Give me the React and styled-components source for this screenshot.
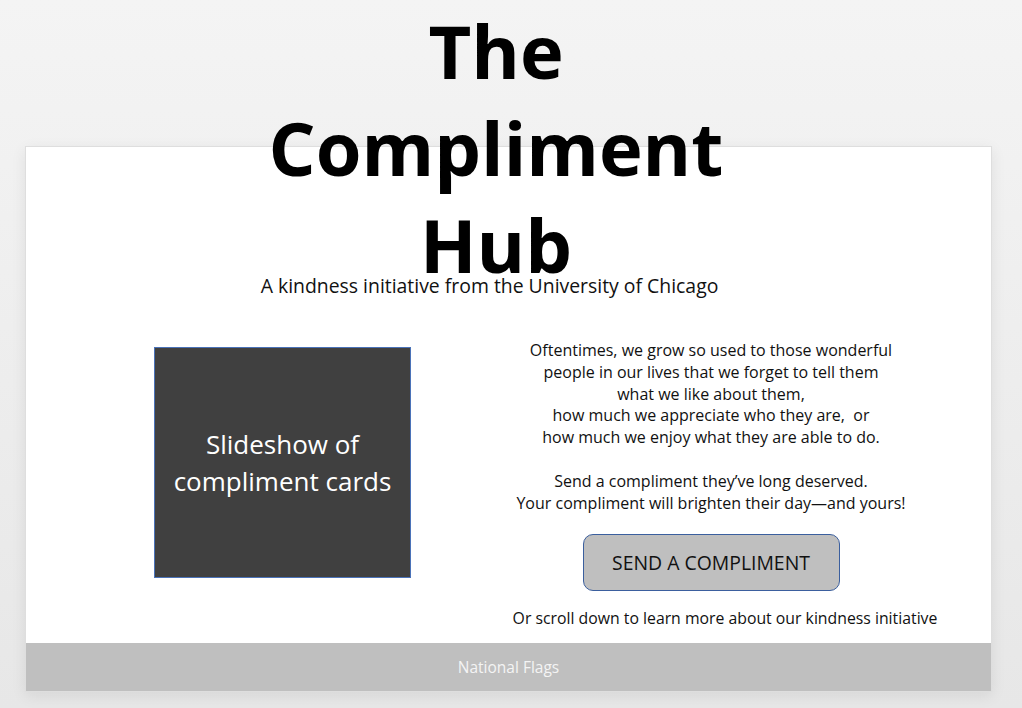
import React from "react";
import styled, { createGlobalStyle } from "styled-components";

const GlobalStyle = createGlobalStyle`
  html, body {
    margin: 0;
    padding: 0;
  }
  body {
    background: linear-gradient(#f4f4f4, #e7e7e7);
    min-height: 708px;
    font-family: "Open Sans", "Noto Sans", sans-serif;
    color: #111;
  }
`;

function App() {
  return (
    <Page>
      <GlobalStyle />
      <Title>
        The
        <br />
        Compliment
        <br />
        Hub
      </Title>
      <Card>
        <Subtitle>A kindness initiative from the University of Chicago</Subtitle>
        <Content>
          <Slideshow>
            Slideshow of
            <br />
            compliment cards
          </Slideshow>
          <Intro>
            <Paragraph>
              Oftentimes, we grow so used to those wonderful
              <br />
              people in our lives that we forget to tell them
              <br />
              what we like about them,
              <br />
              how much we appreciate who they are,&nbsp; or
              <br />
              how much we enjoy what they are able to do.
            </Paragraph>
            <Paragraph>
              Send a compliment they’ve long deserved.
              <br />
              Your compliment will brighten their day—and yours!
            </Paragraph>
            <SendButton>SEND A COMPLIMENT</SendButton>
            <ScrollHint>Or scroll down to learn more about our kindness initiative</ScrollHint>
          </Intro>
        </Content>
        <Footer>National Flags</Footer>
      </Card>
    </Page>
  );
}

export default App;

const Page = styled.div`
  display: flex;
  flex-direction: column;
  align-items: flex-start;
  padding: 2px 0 0 25px;
`;

const Title = styled.h1`
  position: relative;
  z-index: 1;
  align-self: stretch;
  margin: 0 30px -147px 0;
  padding-right: 25px;
  text-align: center;
  font-size: 74px;
  line-height: 97px;
  font-weight: 700;
  color: #000;
`;

const Card = styled.div`
  width: 967px;
  height: 546px;
  background: #fff;
  border: 1px solid #dedede;
  box-sizing: border-box;
  box-shadow: 0 4px 14px rgba(0, 0, 0, 0.08);
  display: flex;
  flex-direction: column;
`;

const Subtitle = styled.p`
  position: relative;
  z-index: 2;
  margin: 126px 0 0;
  padding-right: 38px;
  text-align: center;
  font-size: 19.4px;
  line-height: 26px;
`;

const Content = styled.div`
  flex: 1;
  display: flex;
  align-items: flex-start;
  gap: 70px;
  padding: 35px 0 0 128px;
`;

const Slideshow = styled.div`
  width: 257px;
  height: 231px;
  margin-top: 13px;
  box-sizing: border-box;
  border: 1.5px solid #4a72b8;
  background: #404040;
  color: #fff;
  display: flex;
  align-items: center;
  justify-content: center;
  text-align: center;
  font-size: 26px;
  line-height: 37px;
`;

const Intro = styled.div`
  width: 460px;
  padding-top: 6px;
  display: flex;
  flex-direction: column;
  align-items: center;
  text-align: center;
  font-size: 16px;
  line-height: 21.8px;
`;

const Paragraph = styled.p`
  margin: 0 0 22px;
`;

const SendButton = styled.button`
  width: 257px;
  height: 57px;
  margin-top: -3px;
  border: 1.5px solid #3b5f9e;
  border-radius: 10px;
  background: #bfbfbf;
  color: #111;
  font-family: inherit;
  font-size: 19.4px;
  cursor: pointer;
`;

const ScrollHint = styled.p`
  margin: 17px 0 0 28px;
  font-size: 15.8px;
  white-space: nowrap;
`;

const Footer = styled.div`
  height: 48px;
  background: #bfbfbf;
  color: #f4f4f4;
  display: flex;
  align-items: center;
  justify-content: center;
  font-size: 15.5px;
`;
